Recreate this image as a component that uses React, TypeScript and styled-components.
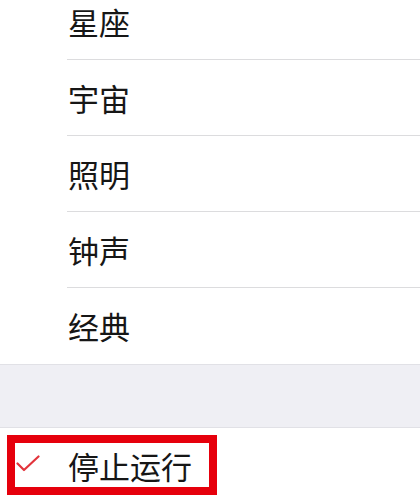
import { FC } from 'react'
import styled, { createGlobalStyle } from 'styled-components'

const GlobalStyle = createGlobalStyle`
  html, body {
    margin: 0;
    padding: 0;
    background: #ffffff;
  }
  body {
    font-family: "Noto Sans CJK SC", "Noto Sans", sans-serif;
  }
`

const Page = styled.div`
  width: 420px;
  height: 495px;
  overflow: hidden;
  background: #ffffff;
`

const List = styled.div`
  display: flex;
  flex-direction: column;
  margin-top: -16px;
`

const Row = styled.div`
  position: relative;
  display: flex;
  align-items: stretch;
  padding-left: 67px;
  background: #ffffff;
`

const Label = styled.div<{ $last?: boolean }>`
  flex: 1;
  height: 75px;
  display: flex;
  align-items: center;
  padding-left: 1px;
  font-size: 31px;
  color: #161616;
  letter-spacing: 0;
  border-bottom: ${p => (p.$last ? '1px solid transparent' : '1px solid #dcdcde')};
`

const GroupGap = styled.div`
  height: 62px;
  background: #efeff4;
  border-top: 1px solid #e1e1e6;
  border-bottom: 1px solid #e1e1e6;
`

const Check = styled.svg`
  position: absolute;
  left: 16px;
  top: 27px;
  width: 24px;
  height: 18px;
`

const Highlight = styled.div`
  position: absolute;
  left: 7px;
  top: 7px;
  width: 210px;
  height: 60px;
  box-sizing: border-box;
  border: 8px solid #e6000c;
  pointer-events: none;
`

const items = ['星座', '宇宙', '照明', '钟声', '经典']

const App: FC = () => (
  <Page>
    <GlobalStyle />
    <List>
      {items.map((name, i) => (
        <Row key={name}>
          <Label $last={i === items.length - 1}>{name}</Label>
        </Row>
      ))}
      <GroupGap />
      <Row>
        <Check viewBox="0 0 24 18">
          <path d="M1.5 8.5 L8 15 L22.5 1.5" fill="none" stroke="#e2343c" strokeWidth="2.2" strokeLinecap="round" strokeLinejoin="round" />
        </Check>
        <Label $last>停止运行</Label>
        <Highlight />
      </Row>
    </List>
  </Page>
)

export default App
